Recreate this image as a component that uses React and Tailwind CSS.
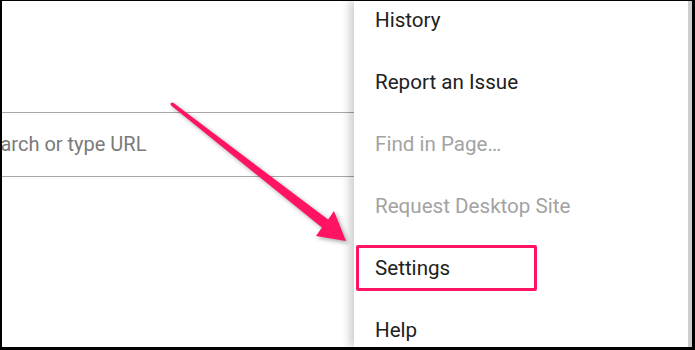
import React from "react";

const ITEMS = [
  { label: "History" },
  { label: "Report an Issue" },
  { label: "Find in Page…", disabled: true },
  { label: "Request Desktop Site", disabled: true },
  { label: "Settings", highlight: true },
  { label: "Help" },
];

export default function App() {
  return (
    <div
      className="relative w-[695px] h-[350px] flex overflow-hidden bg-white border-black border-t border-l-2 border-r-[3px] border-b-[3px]"
      style={{ fontFamily: "Roboto, 'Noto Sans', sans-serif" }}
    >
      {/* browser page behind the menu */}
      <div className="w-[352px] shrink-0 overflow-hidden">
        <div className="mt-[111px] h-[65px] border-y border-[#a8a8a8] overflow-hidden">
          <div className="-ml-[24px] whitespace-nowrap text-[20px] leading-[63px] text-[#7a7a7a]">
            Search or type URL
          </div>
        </div>
      </div>

      {/* overflow menu */}
      <div className="relative z-10 flex-1 bg-white border-r-4 border-[#cfcfcf] shadow-[-5px_0_8px_rgba(0,0,0,0.18)]">
        <div className="-mt-3">
          {ITEMS.map((it) =>
            it.highlight ? (
              <div key={it.label} className="h-[62px] flex items-center pl-[2px]">
                <div className="w-[181px] h-[46px] rounded-[2px] border-[3px] border-[#ff1464] pl-4 text-[20.6px] leading-[40px] text-[#212121]">
                  {it.label}
                </div>
              </div>
            ) : (
              <div
                key={it.label}
                className={`h-[62px] pl-[21px] text-[20.6px] leading-[62px] whitespace-nowrap ${
                  it.disabled ? "text-[#a3a3a3]" : "text-[#212121]"
                }`}
              >
                {it.label}
              </div>
            )
          )}
        </div>
      </div>

      {/* annotation arrow */}
      <svg
        className="absolute left-[-2px] top-[-1px] z-20 pointer-events-none"
        width="695"
        height="350"
        viewBox="0 0 695 350"
        style={{ filter: "drop-shadow(2px 2px 2px rgba(0,0,0,0.35))" }}
      >
        <polygon
          fill="#ff1464"
          points="172.9,102.6 328.1,219.6 334,211 346,241 316,236 321.9,227.4 171.1,105.4"
        />
        <circle cx="172" cy="104" r="1.5" fill="#ff1464" />
      </svg>
    </div>
  );
}
